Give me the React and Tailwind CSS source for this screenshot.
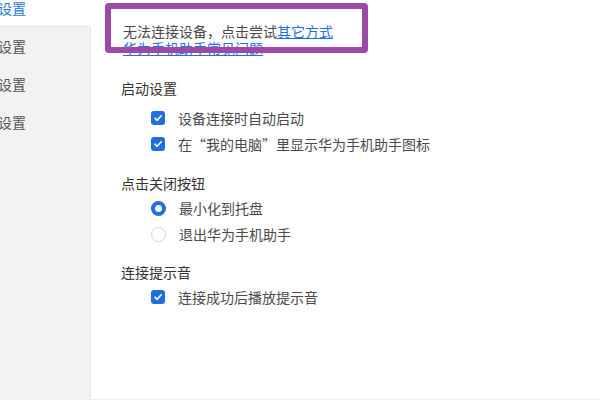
const font = { fontFamily: '"Noto Sans CJK SC", "Noto Sans", sans-serif' };

function Check() {
    return (
        <span className="w-[14px] h-[14px] rounded-[3px] bg-[#1f6fde] flex items-center justify-center shrink-0">
            <svg width="10" height="10" viewBox="0 0 10 10" fill="none">
                <path d="M2 5.2 L4.2 7.3 L8.2 2.8" stroke="#fff" strokeWidth="1.6" strokeLinecap="round" strokeLinejoin="round" />
            </svg>
        </span>
    );
}

function Radio({ on }) {
    return on ? (
        <span className="w-[15px] h-[15px] rounded-full border-[4px] border-[#1f6fde] bg-white shrink-0" />
    ) : (
        <span className="w-[15px] h-[15px] rounded-full border border-[#d4d4d4] bg-white shrink-0" />
    );
}

function Row({ icon, children }) {
    return (
        <div className="h-[26px] flex items-center pl-[30px] gap-[13px] text-[14px] text-[#4a4a4a]">
            {icon}
            <span>{children}</span>
        </div>
    );
}

export default function App() {
    return (
        <div style={font} className="w-[600px] h-[400px] relative overflow-hidden bg-white flex">
            {/* Sidebar */}
            <div className="w-[91px] flex flex-col shrink-0">
                <div className="h-[26px] text-[14px] leading-[16px] text-[#1f78e0] -ml-[2px]">设置</div>
                <div className="flex-1 bg-[#f2f2f2] border-t border-r border-[#e4e4e4] rounded-tr-[3px] text-[14px] text-[#555]">
                    <div className="h-[38px] flex items-center -ml-[2px]">设置</div>
                    <div className="h-[38px] flex items-center -ml-[2px]">设置</div>
                    <div className="h-[38px] flex items-center -ml-[2px]">设置</div>
                </div>
            </div>

            {/* Main */}
            <div className="flex-1 pl-[30px] pt-[23px] border-b border-[#eeeeee]">
                <div className="ml-[2px] text-[14px] leading-[17px] text-[#4a4a4a]">
                    <div>
                        无法连接设备，点击尝试<span className="text-[#1f6fde] underline">其它方式</span>
                    </div>
                    <div className="text-[#1f6fde] underline">华为手机助手常见问题</div>
                </div>

                <div className="mt-[21px] h-[20px] leading-[20px] text-[14px] text-[#333]">启动设置</div>
                <div className="mt-[7px]">
                    <Row icon={<Check />}>设备连接时自动启动</Row>
                    <Row icon={<Check />}>在“我的电脑”里显示华为手机助手图标</Row>
                </div>

                <div className="mt-[16px] h-[20px] leading-[20px] text-[14px] text-[#333]">点击关闭按钮</div>
                <div className="mt-[2px]">
                    <Row icon={<Radio on />}>最小化到托盘</Row>
                    <Row icon={<Radio />}>退出华为手机助手</Row>
                </div>

                <div className="mt-[15px] h-[20px] leading-[20px] text-[14px] text-[#333]">连接提示音</div>
                <div className="mt-[2px]">
                    <Row icon={<Check />}>连接成功后播放提示音</Row>
                </div>
            </div>

            {/* Highlight frame drawn over the notice */}
            <div className="absolute left-[105px] top-[3px] w-[263px] h-[50px] border-[6px] border-[#9c4aa6] rounded-[4px]" />
        </div>
    );
}
